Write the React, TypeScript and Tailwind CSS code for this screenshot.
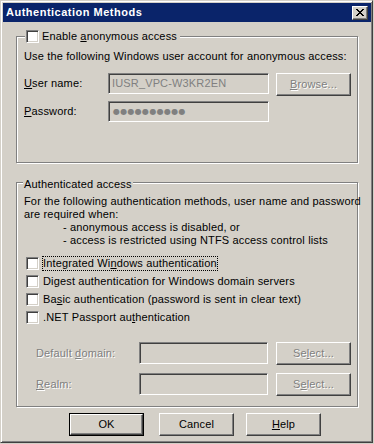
import React from 'react';

const sunken =
  'border border-t-[#808080] border-l-[#808080] border-r-white border-b-white shadow-[inset_1px_1px_0_#404040,inset_-1px_-1px_0_#d4d0c8]';
const raised =
  'border border-t-white border-l-white border-r-[#404040] border-b-[#404040] shadow-[inset_-1px_-1px_0_#808080]';
const grayText = 'text-[#808080] [text-shadow:1px_1px_0_#fff]';

function Checkbox() {
  return <div className={`w-[13px] h-[13px] shrink-0 bg-white ${sunken}`} />;
}

function Button({ children, disabled = false, className = '' }: { children: React.ReactNode; disabled?: boolean; className?: string }) {
  return (
    <div className={`w-[75px] h-[23px] shrink-0 flex items-center justify-center ${raised} ${disabled ? grayText : 'text-black'} ${className}`}>
      {children}
    </div>
  );
}

function GroupBox({ legend, legendClass, className, children }: { legend: React.ReactNode; legendClass: string; className: string; children: React.ReactNode }) {
  return (
    <div className={`relative border border-[#808080] shadow-[inset_1px_1px_0_#fff,1px_1px_0_#fff] ${className}`}>
      <div className={`absolute bg-[#d4d0c8] ${legendClass}`}>{legend}</div>
      {children}
    </div>
  );
}

const methods: { pre: string; key: string; post: string; focus?: boolean }[] = [
  { pre: 'Integrated Wi', key: 'n', post: 'dows authentication', focus: true },
  { pre: 'Di', key: 'g', post: 'est authentication for Windows domain servers' },
  { pre: 'Ba', key: 's', post: 'ic authentication (password is sent in clear text)' },
  { pre: '.NET Passport au', key: 't', post: 'hentication' },
];

export default function App() {
  return (
    <div className="w-[374px] h-[444px] bg-[#d4d0c8] overflow-hidden whitespace-nowrap font-['Liberation_Sans',Arial,sans-serif] text-[11px] leading-[13px] tracking-[0.15px] text-black">
      <div className="w-[373px] h-[443px] flex flex-col border border-t-[#d4d0c8] border-l-[#d4d0c8] border-r-[#404040] border-b-[#404040] shadow-[inset_1px_1px_0_#fff,inset_-1px_-1px_0_#808080] pl-[2px] pr-[1px] pt-[2px]">
        {/* title bar */}
        <div className="h-[19px] bg-[#0a246a] flex items-center justify-between pl-[3px] pr-[3px]">
          <span className="text-white font-bold text-[11px] tracking-[0.5px]">Authentication Methods</span>
          <div className={`w-[16px] h-[14px] bg-[#d4d0c8] flex items-center justify-center ${raised}`}>
            <svg width="8" height="7" viewBox="0 0 8 7" shapeRendering="crispEdges">
              <path
                fill="#000"
                d="M0 0h2v1H0z M6 0h2v1H6z M1 1h2v1H1z M5 1h2v1H5z M2 2h4v1H2z M3 3h2v1H3z M2 4h4v1H2z M1 5h2v1H1z M5 5h2v1H5z M0 6h2v1H0z M6 6h2v1H6z"
              />
            </svg>
          </div>
        </div>

        {/* anonymous access */}
        <GroupBox
          className="ml-[13px] mt-[14px] w-[342px] h-[127px]"
          legendClass="top-[-7px] left-[8px] h-[13px] flex items-center pl-[1px] pr-[3px]"
          legend={
            <>
              <Checkbox />
              <span className="ml-[3px]">
                Enable <u>a</u>nonymous access
              </span>
            </>
          }
        >
          <p className="mt-[13px] pl-[7px]">Use the following Windows user account for anonymous access:</p>
          <div className="mt-[10px] pl-[7px] flex items-start">
            <div className="w-[84px] h-[21px] flex items-center">
              <span>
                <u>U</u>ser name:
              </span>
            </div>
            <div className={`w-[161px] h-[21px] flex items-center pl-[3px] text-[#808080] ${sunken}`}>IUSR_VPC-W3KR2EN</div>
            <Button disabled className="ml-[7px]">
              <span>
                <u>B</u>rowse...
              </span>
            </Button>
          </div>
          <div className="mt-[5px] pl-[7px] flex items-start">
            <div className="w-[84px] h-[21px] flex items-center">
              <span>
                <u>P</u>assword:
              </span>
            </div>
            <div className={`w-[161px] h-[21px] flex items-center pl-[4px] text-[#808080] text-[8px] tracking-[0.3px] font-['DejaVu_Sans',sans-serif] ${sunken}`}>
              ●●●●●●●●●●
            </div>
          </div>
        </GroupBox>

        {/* authenticated access */}
        <GroupBox
          className="ml-[13px] mt-[19px] w-[342px] h-[225px]"
          legendClass="top-[-5px] left-[6px] px-[1px]"
          legend={<span>Authenticated access</span>}
        >
          <div className="mt-[12px] pl-[7px]">
            <p>For the following authentication methods, user name and password</p>
            <p>are required when:</p>
            <p className="pl-[39px]">- anonymous access is disabled, or</p>
            <p className="pl-[39px]">- access is restricted using NTFS access control lists</p>
          </div>
          <div className="mt-[9px] pl-[9px] flex flex-col gap-[3px]">
            {methods.map((m) => (
              <div key={m.key + m.pre} className="h-[15px] flex items-center">
                <Checkbox />
                <span className={`ml-[3px] border ${m.focus ? 'border-dotted border-black' : 'border-transparent'}`}>
                  {m.pre}
                  <u>{m.key}</u>
                  {m.post}
                </span>
              </div>
            ))}
          </div>
          <div className="mt-[17px] pl-[19px] flex items-start">
            <div className={`w-[103px] h-[22px] flex items-center ${grayText}`}>
              <span>
                Default <u>d</u>omain:
              </span>
            </div>
            <div className={`w-[129px] h-[22px] ${sunken}`} />
            <Button disabled className="ml-[8px]">
              <span>
                Se<u>l</u>ect...
              </span>
            </Button>
          </div>
          <div className="mt-[8px] pl-[19px] flex items-start">
            <div className={`w-[103px] h-[22px] flex items-center ${grayText}`}>
              <span>
                <u>R</u>ealm:
              </span>
            </div>
            <div className={`w-[129px] h-[22px] ${sunken}`} />
            <Button disabled className="ml-[8px]">
              <span>
                S<u>e</u>lect...
              </span>
            </Button>
          </div>
        </GroupBox>

        {/* dialog buttons */}
        <div className="mt-[6px] flex items-start">
          <div className="ml-[66px] w-[75px] h-[23px] border border-black flex">
            <div className={`flex-1 flex items-center justify-center ${raised}`}>OK</div>
          </div>
          <Button className="ml-[15px]">Cancel</Button>
          <Button className="ml-[12px]">
            <span>
              <u>H</u>elp
            </span>
          </Button>
        </div>
      </div>
    </div>
  );
}
